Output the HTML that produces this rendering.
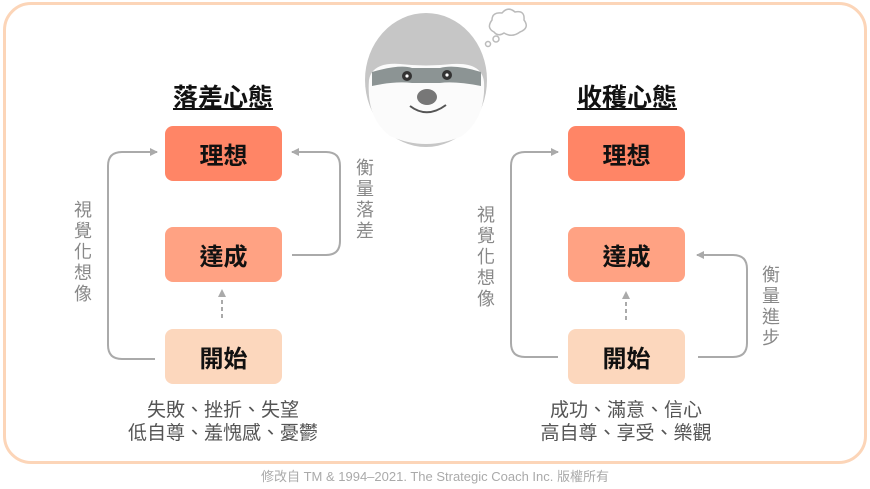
<!DOCTYPE html><html><head><meta charset="utf-8"><style>
body{margin:0;width:870px;height:489px;background:#fff;position:relative;overflow:hidden;font-family:"Liberation Sans","Noto Sans CJK TC",sans-serif}
.frame{position:absolute;left:3px;top:2px;width:858px;height:456px;border:3px solid #fcd5b8;border-radius:28px}
.box{position:absolute;width:117px;height:55px;border-radius:8px;font-weight:bold;font-size:24px;color:#111;display:flex;align-items:center;justify-content:center}
.b1{background:#ff8566}.b2{background:#ffa283}.b3{background:#fcd7bd}
.t{position:absolute;font-weight:bold;font-size:25px;text-decoration:underline;color:#111;width:160px;text-align:center}
.v{position:absolute;width:20px;font-size:18px;line-height:21px;color:#888;text-align:center}
.low{position:absolute;width:260px;text-align:center;font-size:19px;line-height:23px;color:#555}
.foot{position:absolute;top:466px;width:870px;text-align:center;font-size:13px;color:#aaa}
</style></head><body>
<div class="frame"></div>
<svg width="870" height="489" style="position:absolute;left:0;top:0">
<defs><marker id="a" markerWidth="8" markerHeight="8" refX="7" refY="4" orient="auto" markerUnits="userSpaceOnUse"><path d="M0,0 L8,4 L0,8z" fill="#aaa"/></marker></defs>
<g fill="none" stroke="#aaa" stroke-width="2">
<path d="M155,359 H122 Q108,359 108,345 V166 Q108,152 122,152 H157" marker-end="url(#a)"/>
<path d="M292,255 H326 Q340,255 340,241 V166 Q340,152 326,152 H292" marker-end="url(#a)"/>
<path d="M222,318 V290" stroke-dasharray="4,3" marker-end="url(#a)"/>
<path d="M558,357 H525 Q511,357 511,343 V166 Q511,152 525,152 H558" marker-end="url(#a)"/>
<path d="M698,357 H733 Q747,357 747,343 V269 Q747,255 733,255 H697" marker-end="url(#a)"/>
<path d="M626,320 V292" stroke-dasharray="4,3" marker-end="url(#a)"/>
</g>
<ellipse cx="426" cy="80" rx="61" ry="67" fill="#c6c6c6"/>
<path d="M369,80 Q372,62 400,64 Q426,67 452,64 Q482,62 484,82 Q486,118 462,136 Q426,152 390,136 Q366,118 369,80z" fill="#fbfbfb"/>
<path d="M372,72 Q400,64 412,68 L440,68 Q455,64 481,72 L481,86 Q455,81 440,83 L412,83 Q395,81 372,86z" fill="#8c9494"/>
<circle cx="407" cy="76" r="5" fill="#333"/><circle cx="407" cy="76" r="1.6" fill="#fff"/>
<circle cx="447" cy="75" r="5" fill="#333"/><circle cx="447" cy="75" r="1.6" fill="#fff"/>
<ellipse cx="427" cy="97" rx="10" ry="8" fill="#777"/>
<path d="M410,106 Q427,119 446,105" stroke="#555" stroke-width="2" fill="none"/>
<g fill="#fff" stroke="#bbb" stroke-width="1.5"><path d="M494,32 Q486,28 492,20 Q492,12 502,13 Q508,6 515,12 Q525,10 524,20 Q530,28 520,32 Q512,38 504,33 Q498,37 494,32z"/><circle cx="496" cy="39" r="3"/><circle cx="488" cy="44" r="2.5"/></g>
</svg>
<div class="t" style="left:143px;top:78px">落差心態</div>
<div class="t" style="left:547px;top:78px">收穫心態</div>
<div class="box b1" style="left:165px;top:126px">理想</div>
<div class="box b2" style="left:165px;top:227px">達成</div>
<div class="box b3" style="left:165px;top:329px">開始</div>
<div class="box b1" style="left:568px;top:126px">理想</div>
<div class="box b2" style="left:568px;top:227px">達成</div>
<div class="box b3" style="left:568px;top:329px">開始</div>
<div class="v" style="left:73px;top:200px">視覺化想像</div>
<div class="v" style="left:355px;top:158px">衡量落差</div>
<div class="v" style="left:476px;top:205px">視覺化想像</div>
<div class="v" style="left:761px;top:265px">衡量進步</div>
<div class="low" style="left:93px;top:399px">失敗、挫折、失望<br>低自尊、羞愧感、憂鬱</div>
<div class="low" style="left:496px;top:399px">成功、滿意、信心<br>高自尊、享受、樂觀</div>
<div class="foot">修改自 TM &amp; 1994–2021. The Strategic Coach Inc. 版權所有</div>
</body></html>
